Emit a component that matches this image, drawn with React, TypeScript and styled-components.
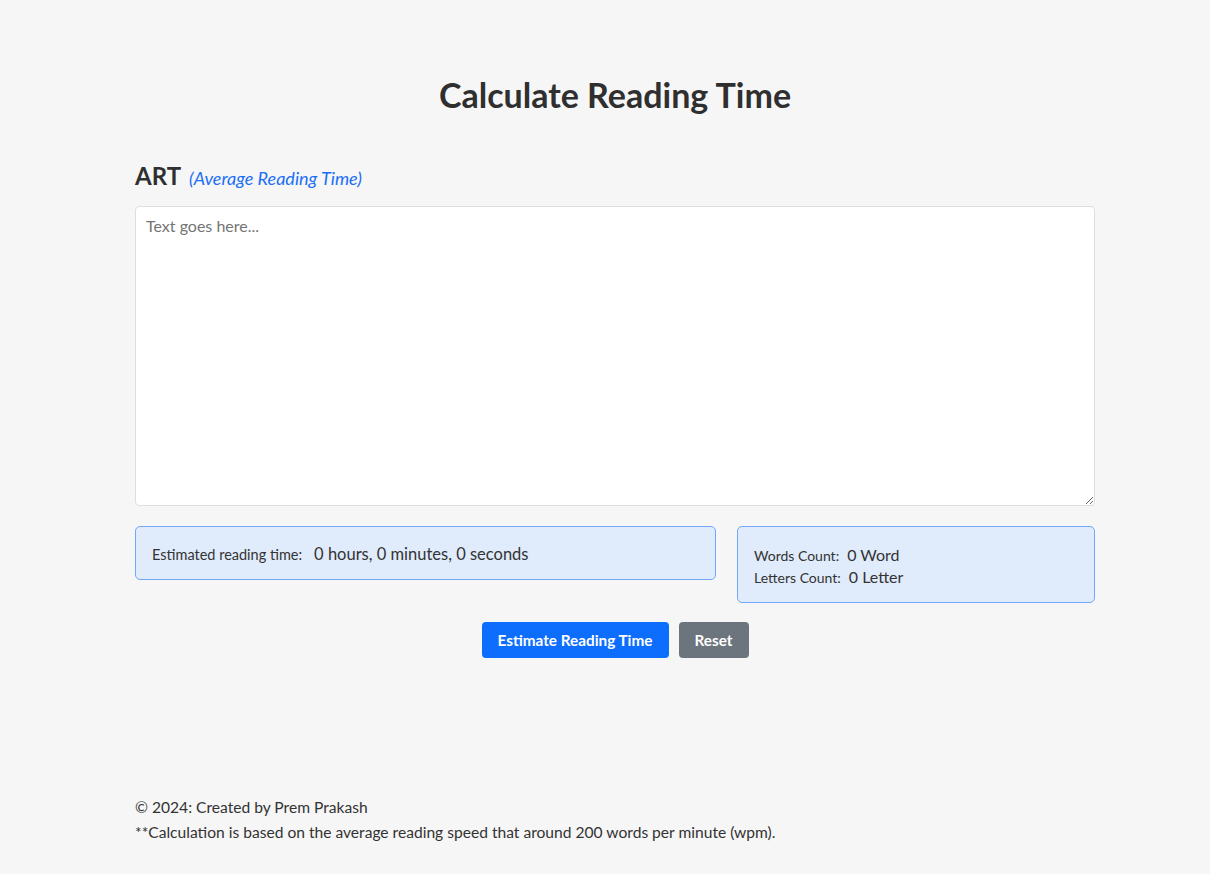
import React, { useState } from "react";
import styled, { createGlobalStyle } from "styled-components";

const GlobalStyle = createGlobalStyle`
  html, body {
    margin: 0;
    padding: 0;
    background: #f6f6f6;
  }
  body {
    font-family: "Lato", "Open Sans", sans-serif;
    color: #333333;
  }
  * {
    box-sizing: border-box;
  }
`;

const Page = styled.div`
  min-height: 100vh;
  display: flex;
  flex-direction: column;
  padding: 75px 0 29px calc(50% - 470px);
`;

const Content = styled.main`
  width: 960px;
  display: flex;
  flex-direction: column;
`;

const Title = styled.h1`
  margin: 0 0 46px;
  font-size: 34px;
  line-height: 40px;
  font-weight: 700;
  text-align: center;
  color: #2f2f2f;
`;

const SubHeading = styled.h2`
  margin: 0 0 13px;
  font-size: 24px;
  line-height: 30px;
  font-weight: 700;
  color: #2f2f2f;
`;

const SubNote = styled.em`
  margin-left: 8px;
  font-size: 18px;
  font-weight: 400;
  color: #1a6ef5;
`;

const TextArea = styled.textarea`
  display: block;
  width: 100%;
  height: 300px;
  padding: 8px 10px;
  font-family: inherit;
  font-size: 16px;
  line-height: 22px;
  color: #333;
  background: #ffffff;
  border: 1px solid #dedede;
  border-radius: 4px;
  outline: none;

  &::placeholder {
    color: #747474;
  }
`;

const ResultRow = styled.div`
  display: grid;
  grid-template-columns: 581px 358px;
  column-gap: 21px;
  align-items: start;
  margin-top: 20px;
`;

const ResultBox = styled.div`
  padding: 17px 16px 14px;
  background: #e0ebfc;
  border: 1px solid #72a8f7;
  border-radius: 5px;
`;

const ResultLine = styled.div`
  display: flex;
  align-items: baseline;
  line-height: 21px;
`;

const ResultLabel = styled.span<{ small?: boolean }>`
  font-size: ${({ small }) => (small ? "14.5px" : "14px")};
  margin-right: ${({ small }) => (small ? "12px" : "8px")};
`;

const ResultValue = styled.span<{ large?: boolean }>`
  font-size: ${({ large }) => (large ? "16.5px" : "16px")};
`;

const Actions = styled.div`
  display: flex;
  justify-content: center;
  gap: 10px;
  margin-top: 19px;
`;

const Button = styled.button<{ variant: "primary" | "secondary" }>`
  height: 36px;
  padding: 0 16px;
  font-family: inherit;
  font-size: 15.3px;
  font-weight: 700;
  color: #ffffff;
  background: ${({ variant }) => (variant === "primary" ? "#0d6efd" : "#6c757d")};
  border: none;
  border-radius: 4px;
  cursor: pointer;
`;

const Footer = styled.footer`
  margin-top: auto;
  width: 960px;
  font-size: 15.6px;
  line-height: 25px;
`;

const FooterLine = styled.p`
  margin: 0;
`;

function formatTime(words: number) {
  const total = Math.round((words / 200) * 60);
  const h = Math.floor(total / 3600);
  const m = Math.floor((total % 3600) / 60);
  const s = total % 60;
  return `${h} hours, ${m} minutes, ${s} seconds`;
}

export default function App() {
  const [text, setText] = useState("");
  const [words, setWords] = useState(0);
  const [letters, setLetters] = useState(0);

  const estimate = () => {
    const list = text.trim().split(/\s+/).filter(Boolean);
    setWords(list.length);
    setLetters(text.replace(/\s/g, "").length);
  };

  const reset = () => {
    setText("");
    setWords(0);
    setLetters(0);
  };

  return (
    <>
      <GlobalStyle />
      <Page>
        <Content>
          <Title>Calculate Reading Time</Title>
          <SubHeading>
            ART<SubNote>(Average Reading Time)</SubNote>
          </SubHeading>
          <TextArea
            placeholder="Text goes here..."
            value={text}
            onChange={e => setText(e.target.value)}
          />
          <ResultRow>
            <ResultBox>
              <ResultLine>
                <ResultLabel small>Estimated reading time:</ResultLabel>
                <ResultValue large>{formatTime(words)}</ResultValue>
              </ResultLine>
            </ResultBox>
            <ResultBox>
              <ResultLine>
                <ResultLabel>Words Count:</ResultLabel>
                <ResultValue>{words} Word</ResultValue>
              </ResultLine>
              <ResultLine>
                <ResultLabel>Letters Count:</ResultLabel>
                <ResultValue>{letters} Letter</ResultValue>
              </ResultLine>
            </ResultBox>
          </ResultRow>
          <Actions>
            <Button variant="primary" onClick={estimate}>
              Estimate Reading Time
            </Button>
            <Button variant="secondary" onClick={reset}>
              Reset
            </Button>
          </Actions>
        </Content>
        <Footer>
          <FooterLine>© 2024: Created by Prem Prakash</FooterLine>
          <FooterLine>
            **Calculation is based on the average reading speed that around 200 words per minute (wpm).
          </FooterLine>
        </Footer>
      </Page>
    </>
  );
}
